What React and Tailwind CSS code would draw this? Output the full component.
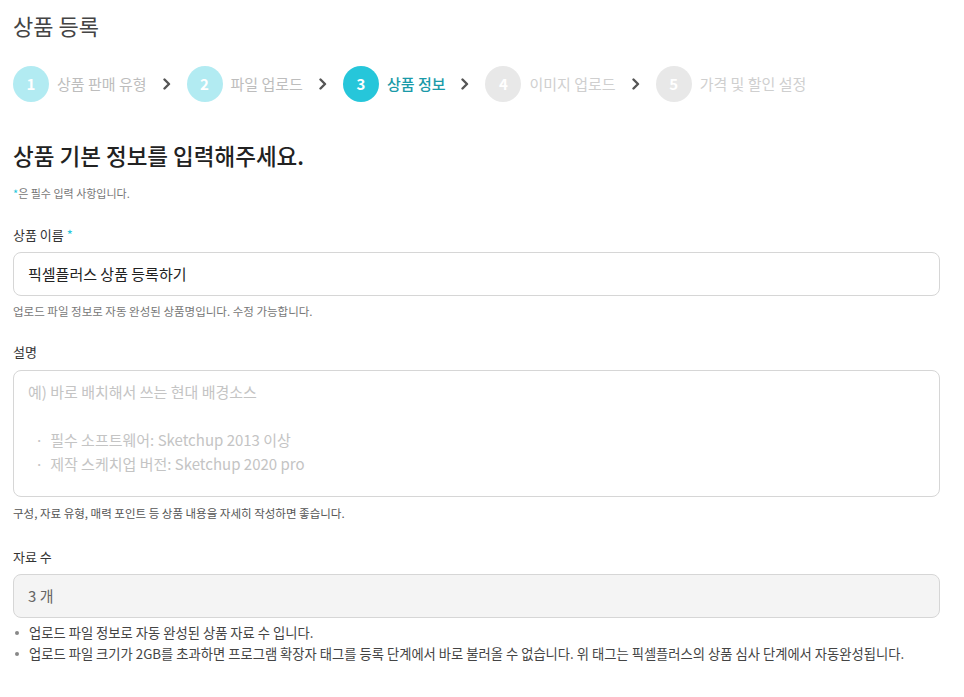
import React from 'react';

const steps = [
  { n: 1, label: '상품 판매 유형', state: 'done' },
  { n: 2, label: '파일 업로드', state: 'done' },
  { n: 3, label: '상품 정보', state: 'active' },
  { n: 4, label: '이미지 업로드', state: 'todo' },
  { n: 5, label: '가격 및 할인 설정', state: 'todo' },
];

function Chevron() {
  return (
    <svg width="10" height="12" viewBox="0 0 10 12" className="mx-[15px]">
      <path d="M2.5 1.5 L7 6 L2.5 10.5" fill="none" stroke="#555" strokeWidth="2.4" strokeLinecap="round" strokeLinejoin="round" />
    </svg>
  );
}

function Step({ n, label, state }) {
  const circle =
    state === 'active' ? 'bg-[#26c6da]' : state === 'done' ? 'bg-[#b2ebf2]' : 'bg-[#e8e8e8]';
  const text =
    state === 'active' ? 'text-[#1a9aa8] font-medium' : state === 'done' ? 'text-[#bdbdbd]' : 'text-[#cfcfcf]';
  return (
    <div className="flex items-center">
      <div className={`w-9 h-9 rounded-full ${circle} flex items-center justify-center text-white text-[15px] font-bold`}>
        {n}
      </div>
      <span className={`ml-2 text-[15px] ${text}`}>{label}</span>
    </div>
  );
}

export default function App() {
  return (
    <div className="min-h-screen bg-white px-[13px] pt-[7px] text-[#333]" style={{ fontFamily: '"Noto Sans CJK KR", "Noto Sans", sans-serif' }}>
      {/* Title */}
      <h1 className="text-[22px] font-normal text-[#444] leading-[36px]">상품 등록</h1>

      {/* Steps */}
      <div className="flex items-center mt-[23px]">
        {steps.map((s, i) => (
          <React.Fragment key={s.n}>
            <Step {...s} />
            {i < steps.length - 1 && <Chevron />}
          </React.Fragment>
        ))}
      </div>

      {/* Heading */}
      <h2 className="mt-[37px] text-[22.5px] font-medium text-[#222] leading-[32px]">상품 기본 정보를 입력해주세요.</h2>
      <p className="mt-[14px] text-[11px] text-[#777] leading-[16px]">
        <span className="text-[#26c6da]">*</span>은 필수 입력 사항입니다.
      </p>

      {/* Name */}
      <div className="mt-[24px]">
        <label className="block text-[13px] font-normal text-[#333] leading-[20px]">
          상품 이름 <span className="text-[#26c6da]">*</span>
        </label>
        <div className="mt-[7px] w-[927px] h-[44px] border border-[#d6d6d6] rounded-lg flex items-center px-[14px] text-[15px] text-[#222]">
          픽셀플러스 상품 등록하기
        </div>
        <p className="mt-[7px] text-[11.5px] text-[#777] leading-[16px]">업로드 파일 정보로 자동 완성된 상품명입니다. 수정 가능합니다.</p>
      </div>

      {/* Description */}
      <div className="mt-[23px]">
        <label className="block text-[13px] font-normal text-[#333] leading-[20px]">설명</label>
        <div className="mt-[8px] w-[927px] h-[127px] border border-[#d6d6d6] rounded-lg px-[14px] pt-[9px] text-[15px] text-[#c4c4c4] leading-[24px]">
          <div>예) 바로 배치해서 쓰는 현대 배경소스</div>
          <div className="h-[24px]" />
          <div className="pl-[7px]">·&nbsp; 필수 소프트웨어: Sketchup 2013 이상</div>
          <div className="pl-[7px]">·&nbsp; 제작 스케치업 버전: Sketchup 2020 pro</div>
        </div>
        <p className="mt-[8px] text-[11.5px] text-[#555] leading-[16px]">구성, 자료 유형, 매력 포인트 등 상품 내용을 자세히 작성하면 좋습니다.</p>
      </div>

      {/* Count */}
      <div className="mt-[26px]">
        <label className="block text-[13px] font-normal text-[#333] leading-[20px]">자료 수</label>
        <div className="mt-[7px] w-[927px] h-[44px] border border-[#d6d6d6] bg-[#f4f4f4] rounded-lg flex items-center px-[14px] text-[15px] text-[#666]">
          3 개
        </div>
        <ul className="mt-[4px] text-[13.3px] text-[#444] leading-[21px]">
          <li className="flex items-center h-[21px]">
            <span className="w-[4px] h-[4px] rounded-full bg-[#888] ml-[2px] mr-[10px]" />
            업로드 파일 정보로 자동 완성된 상품 자료 수 입니다.
          </li>
          <li className="flex items-center h-[21px]">
            <span className="w-[4px] h-[4px] rounded-full bg-[#888] ml-[2px] mr-[10px]" />
            업로드 파일 크기가 2GB를 초과하면 프로그램 확장자 태그를 등록 단계에서 바로 불러올 수 없습니다. 위 태그는 픽셀플러스의 상품 심사 단계에서 자동완성됩니다.
          </li>
        </ul>
      </div>
    </div>
  );
}
